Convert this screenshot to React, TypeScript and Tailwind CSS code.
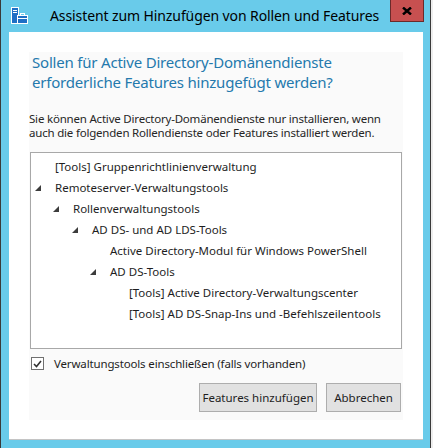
import React from 'react';

type TreeItem = { label: string; level: number; expanded?: boolean };

const items: TreeItem[] = [
  { label: '[Tools] Gruppenrichtlinienverwaltung', level: 0 },
  { label: 'Remoteserver-Verwaltungstools', level: 0, expanded: true },
  { label: 'Rollenverwaltungstools', level: 1, expanded: true },
  { label: 'AD DS- und AD LDS-Tools', level: 2, expanded: true },
  { label: 'Active Directory-Modul für Windows PowerShell', level: 3 },
  { label: 'AD DS-Tools', level: 3, expanded: true },
  { label: '[Tools] Active Directory-Verwaltungscenter', level: 4 },
  { label: '[Tools] AD DS-Snap-Ins und -Befehlszeilentools', level: 4 },
];

const indent = ['pl-[4px]', 'pl-[22px]', 'pl-[41px]', 'pl-[59px]', 'pl-[78px]'];

const font = { fontFamily: '"Noto Sans", "Open Sans", sans-serif' };

function TitleIcon() {
  return (
    <svg width="17" height="18" viewBox="0 0 17 18">
      <rect x="0.5" y="0.5" width="7" height="16" fill="#1f6fc5" stroke="#ffffff" />
      <rect x="2" y="3" width="4" height="1" fill="#ffffff" />
      <rect x="2" y="5" width="4" height="1" fill="#ffffff" />
      <rect x="6.5" y="8.5" width="10" height="8" fill="#1f6fc5" stroke="#ffffff" />
      <rect x="9.5" y="6.5" width="4" height="2" fill="none" stroke="#ffffff" />
      <rect x="7" y="11" width="9" height="1" fill="#ffffff" />
    </svg>
  );
}

function Expander() {
  return (
    <svg width="6" height="6" viewBox="0 0 6 6">
      <polygon points="6,0 6,6 0,6" fill="#3c3c3c" />
    </svg>
  );
}

export default function App() {
  return (
    <div className="w-[433px] h-[448px] flex bg-[#eeeeee] overflow-hidden" style={font}>
      <div className="w-[431px] h-[448px] shrink-0 bg-[#69cbea] border-l border-r border-[#3a3a3a] flex flex-col">
        {/* title bar */}
        <div className="h-[32px] flex items-start">
          <div className="pl-[10px] pt-[7px] shrink-0">
            <TitleIcon />
          </div>
          <div className="ml-[22px] pt-[6px] text-[14px] leading-[20px] tracking-[-0.1px] text-black whitespace-nowrap">
            Assistent zum Hinzufügen von Rollen und Features
          </div>
          <div className="ml-auto mr-[6px] shrink-0 w-[34px] h-[22px] bg-[#c75050] border border-t-0 border-[#6b2a2a] flex items-center justify-center">
            <svg width="10" height="8" viewBox="0 0 10 8">
              <path d="M1 0.5 L9 7.5 M9 0.5 L1 7.5" stroke="#000" strokeWidth="2.4" />
            </svg>
          </div>
        </div>

        {/* client area */}
        <div className="ml-[8px] w-[414px] h-[408px] bg-white border-b border-[#c4c4c4] pt-[20px] pl-[20px]">
          <div className="w-[374px] h-[368px] bg-[#fafafa] flex flex-col">
            <div className="pl-[3px] text-[15px] leading-[20px] tracking-[-0.2px] text-[#2479ad] whitespace-nowrap">
              Sollen für Active Directory-Domänendienste
              <br />
              erforderliche Features hinzugefügt werden?
            </div>
            <div className="mt-[20px] text-[11.5px] leading-[14px] tracking-[-0.2px] text-[#262626] whitespace-nowrap">
              Sie können Active Directory-Domänendienste nur installieren, wenn
              <br />
              auch die folgenden Rollendienste oder Features installiert werden.
            </div>

            <div className="mt-[12px] ml-[1px] w-[372px] h-[197px] bg-white border border-[#a8a8a8] pt-[3px]">
              {items.map((it) => (
                <div
                  key={it.label}
                  className={`h-[21px] flex items-center text-[11.5px] text-[#1e1e1e] whitespace-nowrap ${indent[it.level]}`}
                >
                  <div className="w-[20px] flex items-center">{it.expanded && <Expander />}</div>
                  <span>{it.label}</span>
                </div>
              ))}
            </div>

            <div className="mt-[8px] ml-[2px] flex items-center h-[13px]">
              <div className="w-[13px] h-[13px] border border-[#707070] bg-white flex items-center justify-center">
                <svg width="9" height="8" viewBox="0 0 9 8">
                  <path d="M1 4 L3.5 6.5 L8 1" fill="none" stroke="#333" strokeWidth="1.6" />
                </svg>
              </div>
              <span className="ml-[10px] text-[11.5px] tracking-[-0.15px] text-[#1e1e1e] whitespace-nowrap">
                Verwaltungstools einschließen (falls vorhanden)
              </span>
            </div>

            <div className="mt-[13px] pr-[2px] flex justify-end gap-[9px]">
              <button className="w-[118px] h-[29px] bg-[#e1e1e1] border border-[#adadad] text-[11.5px] text-[#1e1e1e]">
                Features hinzufügen
              </button>
              <button className="w-[75px] h-[29px] bg-[#e1e1e1] border border-[#adadad] text-[11.5px] text-[#1e1e1e]">
                Abbrechen
              </button>
            </div>
          </div>
        </div>
      </div>
    </div>
  );
}
